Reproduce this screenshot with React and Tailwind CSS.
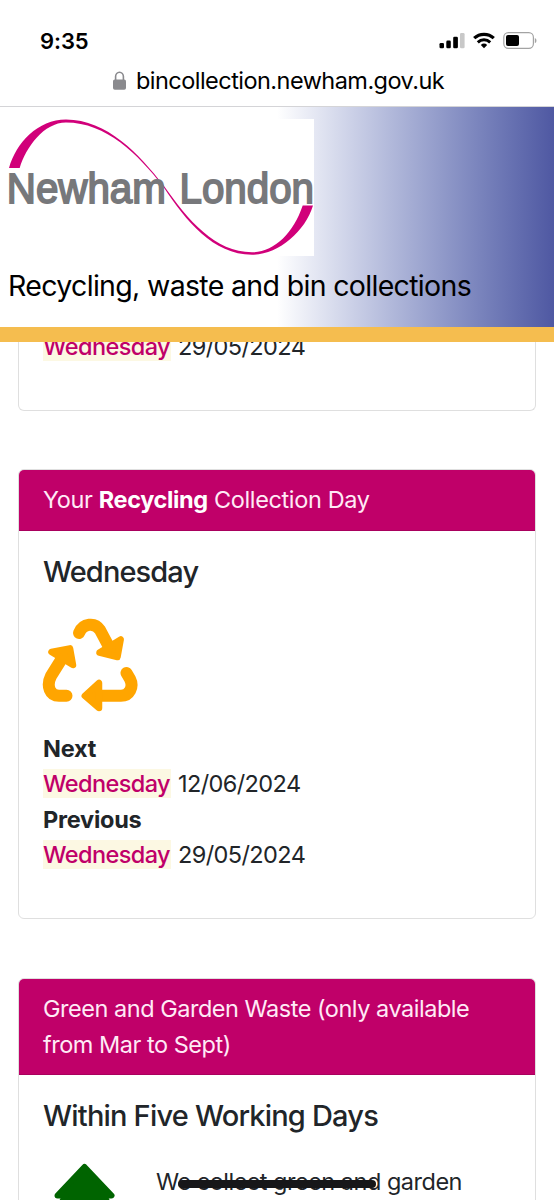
import React from 'react';

function StatusBar() {
  return (
    <div className="flex h-[66px] items-start justify-between pt-[28px] pr-[17px] pl-10">
      <span className="text-[22px] leading-[26px] font-semibold tracking-[-0.1px] text-black">9:35</span>
      <svg className="mt-[3px] h-[18px] w-[98px]" viewBox="439 31 98 18">
        <rect x="439.5" y="43" width="4.5" height="5.3" rx="1.3" />
        <rect x="446.3" y="40.6" width="4.5" height="7.7" rx="1.3" />
        <rect x="453.2" y="36.8" width="4.7" height="11.5" rx="1.3" />
        <rect x="460" y="33" width="4.6" height="15.3" rx="1.3" fill="#c8c8c8" />
        <g fill="none" stroke="#000" strokeWidth="3.2">
          <path d="M474.2 38.2a14.2 14.2 0 0 1 19.6 0" />
          <path d="M477.8 42.3a9.1 9.1 0 0 1 12.4 0" strokeWidth="3" />
        </g>
        <path d="M484 48.2l-3.2-3.3a4.8 4.8 0 0 1 6.4 0z" />
        <rect x="503.8" y="32.7" width="29.6" height="15.6" rx="4.6" fill="none" stroke="#a3a3a3" strokeWidth="1.2" />
        <rect x="506" y="35" width="13" height="11" rx="2" />
        <path d="M534.8 38v5.2c2.2-.8 2.2-4.4 0-5.2z" fill="#a3a3a3" />
      </svg>
    </div>
  );
}

function AddressBar() {
  return (
    <div className="flex h-[41px] items-start border-b border-[#d4d4d7] pl-[113px]">
      <svg className="mt-[5px] h-[20px] w-[13px]" viewBox="0 0 13 20">
        <rect x="0" y="8.4" width="13" height="10.4" rx="1.8" fill="#8a8a8e" />
        <path d="M2.6 9V5.6a3.9 4.3 0 0 1 7.8 0V9" fill="none" stroke="#8a8a8e" strokeWidth="1.6" />
      </svg>
      <span className="ml-[10px] text-[23.5px] leading-[30px] tracking-[-0.54px] text-black">
        bincollection.newham.gov.uk
      </span>
    </div>
  );
}

function Logo() {
  return (
    <svg className="block h-[137px] w-[306px] bg-white" viewBox="8 119 306 137">
      <path
        fill="#d1007a"
        d="M9 168C16 143 38 119.6 66 119.6C107 119.6 139 154 164 186C188 220 215 252.2 252 252.2C274 252 293 234 302.7 205.5H313C305 232 278 254.7 252 254.7C213 254.7 186 221 163.4 186.8C138 154 106 122.5 66 122.5C44 122.5 26 147 19.7 168Z"
      />
      <g fill="#77787b" stroke="#77787b" strokeWidth="1.8" fontFamily="Liberation Sans, Arial, sans-serif" fontSize="43">
        <text x="6.8" y="202.6" textLength="159" lengthAdjust="spacingAndGlyphs">Newham</text>
        <text x="179.5" y="202.6" textLength="134.500" lengthAdjust="spacingAndGlyphs">London</text>
      </g>
    </svg>
  );
}

function RecycleIcon() {
  return (
    <svg className="mt-[28px] mb-[17px] -ml-px block size-[96px]" viewBox="42 617 96 96" fill="none">
      <g stroke="#ffa500" strokeWidth="12" strokeLinecap="round" strokeLinejoin="round">
        <path d="M79 633C83 623 95 622 100 630L108 645" />
        <path d="M61 660L51 676C46 686 50 695.800 59 695.800H66.5" />
        <path d="M126.5 673L130 679C134 687 129.500 695.800 121 695.800H100" />
      </g>
      <g fill="#ffa500" stroke="#ffa500" strokeWidth="6.5" strokeLinejoin="round">
        <path d="M99.500 652.5L120.700 639.5L117.500 657Z" />
        <path d="M51.500 652L70 648.400L73 665Z" />
        <path d="M84.800 695.8L99 683V708Z" />
      </g>
    </svg>
  );
}

function TreeIcon() {
  return (
    <svg className="block h-[96px] w-[84px] shrink-0" viewBox="42 1161 84 96" fill="#006400">
      <path
        stroke="#006400"
        strokeWidth="6"
        strokeLinejoin="round"
        d="M83.500 1166L110.500 1194.500H102L118 1218H110L122 1239H46L58 1218H50L65 1194.500H56.500Z"
      />
      <path d="M79 1239h10v15h-10z" />
    </svg>
  );
}

function Header() {
  return (
    <header className="h-[235px] border-b-[15px] border-[#f5bd4f] bg-linear-to-r from-white from-50% to-[#4f58a2] px-2 pt-3">
      <Logo />
      <h1 className="mt-[10px] text-[28.5px] leading-[40px] tracking-[-0.67px] whitespace-nowrap text-black">
        Recycling, waste and bin collections
      </h1>
    </header>
  );
}

function CollectionDate({ label, day, date }) {
  return (
    <div>
      {label && <div className="font-bold tracking-[-0.25px]">{label}</div>}
      <div className="flex h-[35.5px] items-center whitespace-nowrap">
        <mark className="h-[29px] w-[128px] bg-[#fcf8e3] leading-[29px] font-medium tracking-[-0.6px] text-[#c00069]">
          {day}
        </mark>
        <span className="ml-[7px] tracking-[-0.6px]">{date}</span>
      </div>
    </div>
  );
}

function Card({ title, children }) {
  return (
    <section className="overflow-hidden rounded-md border-[1.5px] border-[#dfdfdf] bg-white">
      <div className="border-b border-[#a9005d] bg-[#c00069] px-6 py-3 text-[#ffeaf6]">{title}</div>
      <div className="px-6 pt-[23px]">{children}</div>
    </section>
  );
}

function App() {
  return (
    <div className="h-[1200px] w-[554px] overflow-hidden bg-white font-[Inter,sans-serif] text-[23.5px] leading-[35.5px] text-[#212529]">
      <StatusBar />
      <AddressBar />
      <Header />
      <main className="flex h-[858px] flex-col overflow-hidden px-[18px]">
        <div className="-mt-[13px] h-[82px] shrink-0 rounded-b-md border-[1.5px] border-t-0 border-[#dfdfdf] px-6">
          <CollectionDate day="Wednesday" date="29/05/2024" />
        </div>

        <div className="mt-[58px] h-[450px] shrink-0">
          <Card
            title={
              <span className="tracking-[-0.37px]">
                Your <b className="font-bold text-white">Recycling</b> Collection Day
              </span>
            }
          >
            <h2 className="text-[29px] leading-[35px] font-medium tracking-[-0.9px]">Wednesday</h2>
            <RecycleIcon />
            <div className="pt-px pb-[45px]">
              <CollectionDate label="Next" day="Wednesday" date="12/06/2024" />
              <CollectionDate label="Previous" day="Wednesday" date="29/05/2024" />
            </div>
          </Card>
        </div>

        <div className="mt-[59px] shrink-0">
          <Card title={<span className="tracking-[-0.48px]">Green and Garden Waste (only available from Mar to Sept)</span>}>
            <h2 className="text-[29px] leading-[35px] font-medium tracking-[-0.8px]">Within Five Working Days</h2>
            <div className="flex pt-[29px]">
              <TreeIcon />
              <p className="relative ml-[29px] pt-[2px] tracking-[-0.5px] whitespace-nowrap">
                We collect green and garden
                <span className="absolute top-[18px] left-[22px] h-[8px] w-[198px] rounded-full bg-[#171719]" />
              </p>
            </div>
          </Card>
        </div>
      </main>
    </div>
  );
}

export default App;
